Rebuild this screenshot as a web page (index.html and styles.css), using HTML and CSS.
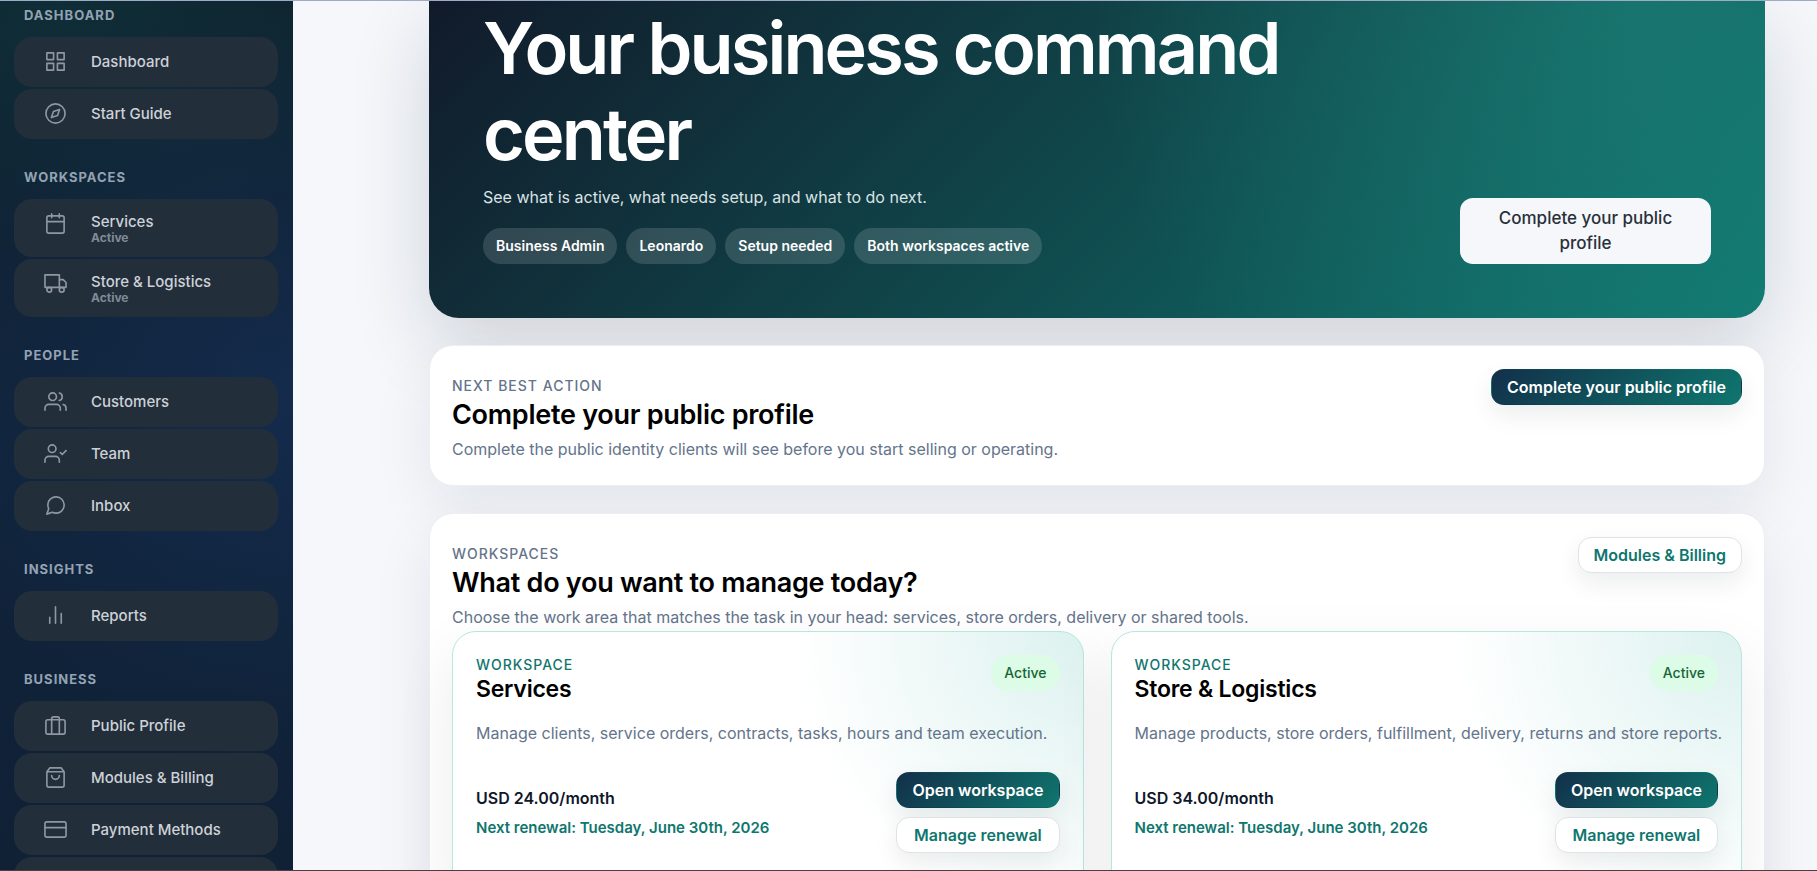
FILE: index.html
```html
<!DOCTYPE html>
<html lang="en">
<head>
<meta charset="utf-8">
<title>Business command center</title>
<link rel="stylesheet" href="styles.css">
</head>
<body>
<div class="shell">
  <nav class="sidebar" aria-label="Main">
    <section class="nav-group">
      <h2 class="nav-label">Dashboard</h2>
      <a class="nav-item" href="#"><svg class="icon" viewBox="0 0 24 24"><rect x="3" y="3" width="7" height="7"/><rect x="14" y="3" width="7" height="7"/><rect x="14" y="14" width="7" height="7"/><rect x="3" y="14" width="7" height="7"/></svg><span>Dashboard</span></a>
      <a class="nav-item" href="#"><svg class="icon" viewBox="0 0 24 24"><circle cx="12" cy="12" r="10"/><polygon points="16.24 7.76 14.12 14.12 7.76 16.24 9.88 9.88 16.24 7.76"/></svg><span>Start Guide</span></a>
    </section>
    <section class="nav-group">
      <h2 class="nav-label">Workspaces</h2>
      <a class="nav-item nav-item-tall" href="#"><svg class="icon" viewBox="0 0 24 24"><rect x="3" y="4" width="18" height="18" rx="2"/><path d="M16 2v4M8 2v4M3 10h18"/></svg><span>Services<small class="nav-state">Active</small></span></a>
      <a class="nav-item nav-item-tall" href="#"><svg class="icon" viewBox="0 0 24 24"><path d="M1 3h15v13H1zM16 8h4l3 3v5h-7z"/><circle cx="5.5" cy="18.5" r="2.5"/><circle cx="18.5" cy="18.5" r="2.5"/></svg><span>Store &amp; Logistics<small class="nav-state">Active</small></span></a>
    </section>
    <section class="nav-group">
      <h2 class="nav-label">People</h2>
      <a class="nav-item" href="#"><svg class="icon" viewBox="0 0 24 24"><path d="M17 21v-2a4 4 0 0 0-4-4H5a4 4 0 0 0-4 4v2"/><circle cx="9" cy="7" r="4"/><path d="M23 21v-2a4 4 0 0 0-3-3.87M16 3.13a4 4 0 0 1 0 7.75"/></svg><span>Customers</span></a>
      <a class="nav-item" href="#"><svg class="icon" viewBox="0 0 24 24"><path d="M16 21v-2a4 4 0 0 0-4-4H5a4 4 0 0 0-4 4v2"/><circle cx="8.5" cy="7" r="4"/><path d="M17 11l2 2 4-4"/></svg><span>Team</span></a>
      <a class="nav-item" href="#"><svg class="icon" viewBox="0 0 24 24"><path d="M21 11.5a8.38 8.38 0 0 1-.9 3.8 8.5 8.5 0 0 1-7.6 4.7 8.38 8.38 0 0 1-3.8-.9L3 21l1.9-5.7a8.38 8.38 0 0 1-.9-3.8 8.5 8.5 0 0 1 4.7-7.6 8.38 8.38 0 0 1 3.8-.9h.5a8.48 8.48 0 0 1 8 8v.5z"/></svg><span>Inbox</span></a>
    </section>
    <section class="nav-group">
      <h2 class="nav-label">Insights</h2>
      <a class="nav-item" href="#"><svg class="icon" viewBox="0 0 24 24"><path d="M18 20V10M12 20V3M6 20v-6"/></svg><span>Reports</span></a>
    </section>
    <section class="nav-group">
      <h2 class="nav-label">Business</h2>
      <a class="nav-item" href="#"><svg class="icon" viewBox="0 0 24 24"><rect x="2" y="6" width="20" height="15" rx="2"/><path d="M16 21V5a2 2 0 0 0-2-2h-4a2 2 0 0 0-2 2v16"/></svg><span>Public Profile</span></a>
      <a class="nav-item" href="#"><svg class="icon" viewBox="0 0 24 24"><path d="M6 2L3 6v14a2 2 0 0 0 2 2h14a2 2 0 0 0 2-2V6l-3-4zM3 6h18M16 10a4 4 0 0 1-8 0"/></svg><span>Modules &amp; Billing</span></a>
      <a class="nav-item" href="#"><svg class="icon" viewBox="0 0 24 24"><rect x="1" y="4" width="22" height="16" rx="2"/><path d="M1 10h22"/></svg><span>Payment Methods</span></a>
      <a class="nav-item" href="#"></a>
    </section>
  </nav>

  <main class="main">
    <header class="hero">
      <div class="hero-copy">
        <h1 class="hero-title">Your business command center</h1>
        <p class="hero-text">See what is active, what needs setup, and what to do next.</p>
        <ul class="chips">
          <li class="chip">Business Admin</li>
          <li class="chip">Leonardo</li>
          <li class="chip">Setup needed</li>
          <li class="chip">Both workspaces active</li>
        </ul>
      </div>
      <button class="hero-button" type="button">Complete your public profile</button>
    </header>

    <section class="panel">
      <div class="panel-head">
        <div class="panel-copy">
          <p class="eyebrow">Next best action</p>
          <h2 class="panel-title">Complete your public profile</h2>
          <p class="muted">Complete the public identity clients will see before you start selling or operating.</p>
        </div>
        <button class="button button-primary" type="button">Complete your public profile</button>
      </div>
    </section>

    <section class="panel">
      <div class="panel-head">
        <div class="panel-copy">
          <p class="eyebrow">Workspaces</p>
          <h2 class="panel-title">What do you want to manage today?</h2>
          <p class="muted">Choose the work area that matches the task in your head: services, store orders, delivery or shared tools.</p>
        </div>
        <button class="button button-light" type="button">Modules &amp; Billing</button>
      </div>
      <div class="workspaces">
        <article class="workspace">
          <div class="workspace-head">
            <div>
              <p class="eyebrow eyebrow-teal">Workspace</p>
              <h3 class="workspace-title">Services</h3>
            </div>
            <span class="badge">Active</span>
          </div>
          <p class="muted workspace-text">Manage clients, service orders, contracts, tasks, hours and team execution.</p>
          <div class="workspace-foot">
            <div class="plan">
              <p class="price">USD 24.00/month</p>
              <p class="renewal">Next renewal: Tuesday, June 30th, 2026</p>
            </div>
            <div class="actions">
              <button class="button button-primary" type="button">Open workspace</button>
              <button class="button button-light" type="button">Manage renewal</button>
            </div>
          </div>
        </article>
        <article class="workspace">
          <div class="workspace-head">
            <div>
              <p class="eyebrow eyebrow-teal">Workspace</p>
              <h3 class="workspace-title">Store &amp; Logistics</h3>
            </div>
            <span class="badge">Active</span>
          </div>
          <p class="muted workspace-text">Manage products, store orders, fulfillment, delivery, returns and store reports.</p>
          <div class="workspace-foot">
            <div class="plan">
              <p class="price">USD 34.00/month</p>
              <p class="renewal">Next renewal: Tuesday, June 30th, 2026</p>
            </div>
            <div class="actions">
              <button class="button button-primary" type="button">Open workspace</button>
              <button class="button button-light" type="button">Manage renewal</button>
            </div>
          </div>
        </article>
      </div>
    </section>
  </main>
</div>
</body>
</html>
```

FILE: styles.css
```css
* {
  box-sizing: border-box;
}

body {
  margin: 0;
  height: 100vh;
  overflow: hidden;
  border-top: 1px solid #9eabc6;
  border-bottom: 1px solid #4a3f44;
  background: #f5f7fb;
  color: #000;
  font-family: Inter, "Liberation Sans", sans-serif;
  font-size: 16px;
  line-height: 24px;
}

h1, h2, h3, p, ul {
  margin: 0;
  padding: 0;
}

button {
  font-family: inherit;
  cursor: pointer;
}

.shell {
  display: flex;
  height: 100%;
  overflow: hidden;
}

/* Sidebar */
.sidebar {
  flex: none;
  width: 293px;
  padding: 4px 15px 0 14px;
  overflow: hidden;
  background:
    radial-gradient(ellipse 420px 260px at 20% 0, rgba(15, 118, 110, 0.16), transparent),
    radial-gradient(circle at 100% 45%, rgba(22, 48, 88, 0.6), transparent 380px),
    linear-gradient(180deg, #0f202c, #10233a 50%, #102136);
}

.nav-group {
  display: flex;
  flex-direction: column;
  gap: 2px;
  margin-bottom: 28px;
}

.nav-label {
  margin-bottom: 9px;
  padding: 0 10px;
  color: #94a3b3;
  font-size: 13px;
  font-weight: 700;
  line-height: 21px;
  letter-spacing: 1px;
  text-transform: uppercase;
}

.nav-item {
  display: flex;
  align-items: flex-start;
  gap: 24px;
  min-height: 50px;
  padding: 13px 30px;
  border-radius: 18px;
  background: #232e3b;
  color: #cdd2d8;
  font-size: 15px;
  font-weight: 500;
  line-height: 24px;
  text-decoration: none;
}

.nav-item-tall {
  line-height: 20px;
}

.nav-state {
  display: block;
  color: #7f8a97;
  font-size: 12px;
  font-weight: 700;
  line-height: 12px;
}

.icon {
  flex: none;
  width: 23px;
  height: 23px;
  fill: none;
  stroke: #8f97a1;
  stroke-width: 1.7;
  stroke-linecap: round;
  stroke-linejoin: round;
}

/* Main column */
.main {
  flex: 1;
  min-width: 0;
  display: flex;
  flex-direction: column;
  gap: 27px;
  padding: 0 52px 0 136px;
}

.hero {
  flex: none;
  display: flex;
  align-items: flex-end;
  justify-content: space-between;
  gap: 54px;
  padding: 4px 54px 54px;
  border-radius: 0 0 30px 30px;
  background:
    radial-gradient(circle at 90% 0, rgba(40, 160, 145, 0.34), transparent 540px),
    linear-gradient(135deg, #111a2a 0%, #0f766e 100%);
  box-shadow: 0 28px 80px rgba(15, 23, 42, 0.16);
  color: #fff;
}

.hero-copy {
  max-width: 900px;
}

.hero-title {
  font-size: 72px;
  font-weight: 600;
  line-height: 86px;
  letter-spacing: -0.04em;
}

.hero-text {
  margin-top: 7px;
  color: #dbe3e6;
  font-size: 16px;
  line-height: 26px;
}

.chips {
  display: flex;
  flex-wrap: wrap;
  gap: 9px;
  margin-top: 18px;
  list-style: none;
}

.chip {
  padding: 6px 13px;
  border-radius: 18px;
  background: rgba(255, 255, 255, 0.14);
  font-size: 14px;
  font-weight: 600;
  line-height: 24px;
}

.hero-button {
  flex: none;
  width: 251px;
  padding: 8px 24px;
  border: 0;
  border-radius: 13px;
  background: #f5f7fb;
  color: #2a3039;
  font-size: 17px;
  font-weight: 500;
  line-height: 25px;
}

/* Panels */
.panel {
  flex: none;
  padding: 23px 22px 22px;
  border: 1px solid #eceef2;
  border-radius: 24px;
  background: #fff;
  box-shadow: 0 22px 60px rgba(15, 23, 42, 0.08);
}

.panel-head {
  display: flex;
  align-items: flex-start;
  justify-content: space-between;
  gap: 24px;
  padding-bottom: 2px;
}

.panel-copy {
  padding-top: 7px;
}

.eyebrow {
  color: #64748b;
  font-size: 14px;
  font-weight: 500;
  line-height: 20px;
  letter-spacing: 1px;
  text-transform: uppercase;
}

.eyebrow-teal {
  color: #0f766e;
}

.panel-title {
  margin: 2px 0 5px;
  font-size: 27px;
  font-weight: 600;
  line-height: 34px;
  letter-spacing: -0.01em;
}

.muted {
  color: #64748b;
  font-size: 16px;
  line-height: 24px;
}

.button {
  height: 36px;
  padding: 0 15px;
  border: 1px solid transparent;
  border-radius: 13px;
  font-size: 16px;
  font-weight: 600;
  line-height: 24px;
  white-space: nowrap;
  box-shadow: 0 10px 24px rgba(15, 23, 42, 0.08);
}

.button-primary {
  background: linear-gradient(135deg, #12304a, #0f766e);
  color: #fff;
}

.button-light {
  border-color: #dfe3e6;
  background: #fff;
  color: #0f766e;
}

/* Workspace cards */
.workspaces {
  display: grid;
  grid-template-columns: 1fr 1fr;
  gap: 27px;
}

.workspace {
  display: flex;
  flex-direction: column;
  min-width: 0;
  padding: 23px 23px 54px;
  border: 1px solid #b5e7df;
  border-radius: 24px;
  background:
    radial-gradient(circle at 100% 0, rgba(20, 164, 148, 0.15), transparent 290px),
    #fff;
  box-shadow: 0 22px 60px rgba(15, 23, 42, 0.08);
}

.workspace-head {
  display: flex;
  align-items: flex-start;
  justify-content: space-between;
  margin-bottom: 18px;
}

.workspace-title {
  font-size: 23px;
  font-weight: 600;
  line-height: 28px;
  letter-spacing: -0.01em;
}

.workspace-text {
  white-space: nowrap;
}

.badge {
  padding: 6px 13px;
  border-radius: 18px;
  background: #dcfce7;
  color: #166534;
  font-size: 14px;
  font-weight: 500;
  line-height: 24px;
}

.workspace-foot {
  display: flex;
  align-items: center;
  justify-content: space-between;
  margin-top: 27px;
}

.plan {
  display: grid;
  gap: 6px;
}

.price {
  color: #0f172a;
  font-weight: 600;
}

.renewal {
  color: #0f766e;
  font-size: 15px;
  font-weight: 600;
}

.actions {
  display: grid;
  gap: 9px;
}
```
